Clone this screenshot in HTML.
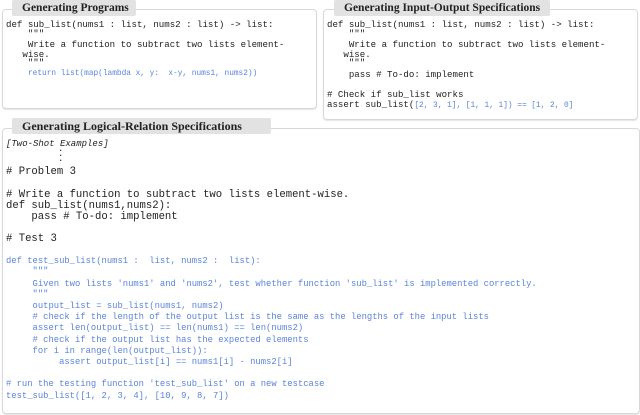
<!DOCTYPE html>
<html><head><style>
body{margin:0;width:640px;height:415px;background:#fff;position:relative;overflow:hidden;font-family:"Liberation Mono",monospace;}
.box{position:absolute;border:1px solid #d8d8d8;border-radius:4px;box-shadow:0 1px 1px #e4e4e4;}
.tab{position:absolute;background:#e2e2e2;font-family:"Liberation Serif",serif;font-weight:bold;font-size:11.5px;color:#222;padding:0 10px;height:16px;line-height:16px;border-radius:2px;white-space:nowrap;}
.l{position:absolute;white-space:pre;color:#222;}
.s{font-size:9.1px;}
.b{font-size:10.6px;}
.c{font-size:8.85px;color:#5b84d8;}
.bl{color:#5b84d8;font-size:7.8px;}
</style></head><body>
<div class="box" style="left:2px;top:9px;width:313px;height:98px"></div>
<div class="tab" style="left:12px;top:0px;width:104px">Generating Programs</div>
<div class="l s" style="left:6px;top:19px">def sub_list(nums1 : list, nums2 : list) -&gt; list:</div>
<div class="l s" style="left:6px;top:28px">    """</div>
<div class="l s" style="left:6px;top:39px">    Write a function to subtract two lists element-</div>
<div class="l s" style="left:6px;top:49px">   wise.</div>
<div class="l s" style="left:6px;top:57px">    """</div>
<div class="l bl" style="left:28px;top:70px">return list(map(lambda x, y:  x-y, nums1, nums2))</div>

<div class="box" style="left:323px;top:9px;width:313px;height:109px"></div>
<div class="tab" style="left:334px;top:0px;width:196px">Generating Input-Output Specifications</div>
<div class="l s" style="left:327px;top:19px">def sub_list(nums1 : list, nums2 : list) -&gt; list:</div>
<div class="l s" style="left:327px;top:28px">    """</div>
<div class="l s" style="left:327px;top:39px">    Write a function to subtract two lists element-</div>
<div class="l s" style="left:327px;top:49px">   wise.</div>
<div class="l s" style="left:327px;top:57px">    """</div>
<div class="l s" style="left:327px;top:69px">    pass # To-do: implement</div>
<div class="l s" style="left:327px;top:89px"># Check if sub_list works</div>
<div class="l s" style="left:327px;top:99px">assert sub_list(<span class="bl">[2, 3, 1], [1, 1, 1]) == [1, 2, 0]</span></div>

<div class="box" style="left:2px;top:128px;width:636px;height:284px"></div>
<div class="tab" style="left:12px;top:118px;width:239px;font-size:12px">Generating Logical-Relation Specifications</div>
<div class="l" style="left:6px;top:139px;font-size:9px;font-style:italic">[Two-Shot Examples]</div>
<div class="l" style="left:58px;top:147px;font-size:9px;line-height:5px">.<br>.<br>.</div>
<div class="l b" style="left:6px;top:166px"># Problem 3</div>
<div class="l b" style="left:6px;top:189px"># Write a function to subtract two lists element-wise.</div>
<div class="l b" style="left:6px;top:200px">def sub_list(nums1,nums2):</div>
<div class="l b" style="left:6px;top:211px">    pass # To-do: implement</div>
<div class="l b" style="left:6px;top:233px"># Test 3</div>
<div class="l c" style="left:6px;top:256px">def test_sub_list(nums1 :  list, nums2 :  list):</div>
<div class="l c" style="left:6px;top:266px">     """</div>
<div class="l c" style="left:6px;top:279px">     Given two lists 'nums1' and 'nums2', test whether function 'sub_list' is implemented correctly.</div>
<div class="l c" style="left:6px;top:289px">     """</div>
<div class="l c" style="left:6px;top:301px">     output_list = sub_list(nums1, nums2)</div>
<div class="l c" style="left:6px;top:312px">     # check if the length of the output list is the same as the lengths of the input lists</div>
<div class="l c" style="left:6px;top:323px">     assert len(output_list) == len(nums1) == len(nums2)</div>
<div class="l c" style="left:6px;top:335px">     # check if the output list has the expected elements</div>
<div class="l c" style="left:6px;top:346px">     for i in range(len(output_list)):</div>
<div class="l c" style="left:6px;top:357px">          assert output_list[i] == nums1[i] - nums2[i]</div>
<div class="l c" style="left:6px;top:379px"># run the testing function 'test_sub_list' on a new testcase</div>
<div class="l c" style="left:6px;top:391px">test_sub_list([1, 2, 3, 4], [10, 9, 8, 7])</div>
</body></html>
